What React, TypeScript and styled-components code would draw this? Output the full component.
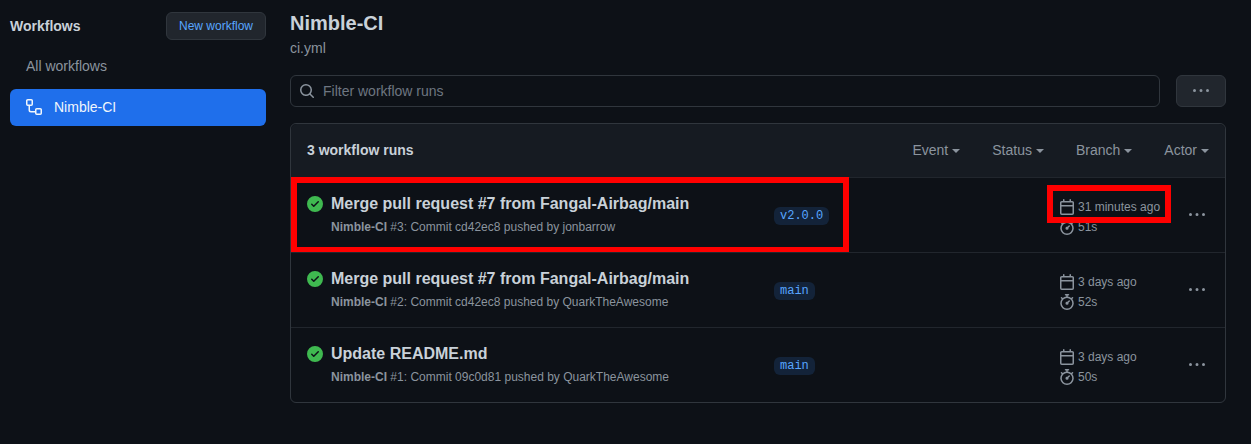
import React from 'react'
import styled, { createGlobalStyle } from 'styled-components'

const paths = {
  search:
    'M10.68 11.74a6 6 0 0 1-7.922-8.982 6 6 0 0 1 8.982 7.922l3.04 3.04a.749.749 0 0 1-.326 1.275.749.749 0 0 1-.734-.215ZM11.5 7a4.499 4.499 0 1 0-8.997 0A4.499 4.499 0 0 0 11.5 7Z',
  kebab:
    'M8 9a1.5 1.5 0 1 0 0-3 1.5 1.5 0 0 0 0 3ZM1.5 9a1.5 1.5 0 1 0 0-3 1.5 1.5 0 0 0 0 3Zm13 0a1.5 1.5 0 1 0 0-3 1.5 1.5 0 0 0 0 3Z',
  calendar:
    'M4.75 0a.75.75 0 0 1 .75.75V2h5V.75a.75.75 0 0 1 1.5 0V2h1.25c.966 0 1.75.784 1.75 1.75v10.5A1.75 1.75 0 0 1 13.25 16H2.75A1.75 1.75 0 0 1 1 14.25V3.75C1 2.784 1.784 2 2.75 2H4V.75A.75.75 0 0 1 4.75 0ZM2.5 7.5v6.75c0 .138.112.25.25.25h10.5a.25.25 0 0 0 .25-.25V7.5Zm10.75-4H2.75a.25.25 0 0 0-.25.25V6h11V3.75a.25.25 0 0 0-.25-.25Z',
  stopwatch:
    'M5.75.75A.75.75 0 0 1 6.5 0h3a.75.75 0 0 1 0 1.5h-.75v1l-.001.041a6.724 6.724 0 0 1 3.464 1.435l.007-.006.75-.75a.75.75 0 1 1 1.06 1.06l-.75.75-.006.007a6.75 6.75 0 1 1-10.548 0L2.72 5.03l-.75-.75a.751.751 0 0 1 .018-1.042.751.751 0 0 1 1.042-.018l.75.75.007.006A6.72 6.72 0 0 1 7.25 2.541V1.5H6.5a.75.75 0 0 1-.75-.75ZM8 14.5a5.25 5.25 0 1 0-.001-10.501A5.25 5.25 0 0 0 8 14.5Zm.389-6.7 1.33-1.33a.75.75 0 1 1 1.061 1.06L9.45 8.861A1.503 1.503 0 0 1 8 10.75a1.499 1.499 0 1 1 .389-2.95Z',
  workflow:
    'M0 1.75C0 .784.784 0 1.75 0h3.5C6.216 0 7 .784 7 1.75v3.5A1.75 1.75 0 0 1 5.25 7H4v4a1 1 0 0 0 1 1h4v-1.25C9 9.784 9.784 9 10.75 9h3.5c.966 0 1.75.784 1.75 1.75v3.5A1.75 1.75 0 0 1 14.25 16h-3.5A1.75 1.75 0 0 1 9 14.25v-.75H5A2.5 2.5 0 0 1 2.5 11V7h-.75A1.75 1.75 0 0 1 0 5.25Zm1.75-.25a.25.25 0 0 0-.25.25v3.5c0 .138.112.25.25.25h3.5a.25.25 0 0 0 .25-.25v-3.5a.25.25 0 0 0-.25-.25Zm9 9a.25.25 0 0 0-.25.25v3.5c0 .138.112.25.25.25h3.5a.25.25 0 0 0 .25-.25v-3.5a.25.25 0 0 0-.25-.25Z',
  check:
    'M8 16A8 8 0 1 1 8 0a8 8 0 0 1 0 16Zm3.78-9.72a.751.751 0 0 0-.018-1.042.751.751 0 0 0-1.042-.018L6.75 9.19 5.28 7.72a.751.751 0 0 0-1.042.018.751.751 0 0 0-.018 1.042l2 2a.75.75 0 0 0 1.06 0Z',
}

function Octicon({ name, color }: { name: keyof typeof paths; color: string }) {
  return (
    <StyledIcon viewBox="0 0 16 16" fill={color}>
      <path d={paths[name]} />
    </StyledIcon>
  )
}

const runs = [
  {
    title: 'Merge pull request #7 from Fangal-Airbag/main',
    number: 3,
    commit: 'cd42ec8',
    author: 'jonbarrow',
    branch: 'v2.0.0',
    date: '31 minutes ago',
    duration: '51s',
    highlighted: true,
  },
  {
    title: 'Merge pull request #7 from Fangal-Airbag/main',
    number: 2,
    commit: 'cd42ec8',
    author: 'QuarkTheAwesome',
    branch: 'main',
    date: '3 days ago',
    duration: '52s',
    highlighted: false,
  },
  {
    title: 'Update README.md',
    number: 1,
    commit: '09c0d81',
    author: 'QuarkTheAwesome',
    branch: 'main',
    date: '3 days ago',
    duration: '50s',
    highlighted: false,
  },
]

const filters = ['Event', 'Status', 'Branch', 'Actor']

export default function App() {
  return (
    <Page>
      <GlobalStyle />
      <Sidebar>
        <SidebarHeader>
          <SidebarTitle>Workflows</SidebarTitle>
          <NewButton>New workflow</NewButton>
        </SidebarHeader>
        <NavItem>All workflows</NavItem>
        <NavItem $active>
          <Octicon name="workflow" color="#f0f6fc" />
          Nimble-CI
        </NavItem>
      </Sidebar>
      <Main>
        <Title>Nimble-CI</Title>
        <FileName>ci.yml</FileName>
        <FilterRow>
          <FilterInput>
            <Octicon name="search" color="#8b949e" />
            Filter workflow runs
          </FilterInput>
          <MoreButton>
            <Octicon name="kebab" color="#8b949e" />
          </MoreButton>
        </FilterRow>
        <RunsBox>
          <BoxHeader>
            <RunCount>3 workflow runs</RunCount>
            <Filters>
              {filters.map((filter) => (
                <Filter key={filter}>
                  {filter}
                  <Caret />
                </Filter>
              ))}
            </Filters>
          </BoxHeader>
          {runs.map((run) => (
            <Row key={run.number}>
              <StatusCell>
                <Octicon name="check" color="#3fb950" />
              </StatusCell>
              <RunInfo>
                <RunTitle>{run.title}</RunTitle>
                <RunMeta>
                  <strong>Nimble-CI</strong> #{run.number}: Commit {run.commit}{' '}
                  pushed by {run.author}
                </RunMeta>
              </RunInfo>
              <BranchCell>
                <BranchLabel>{run.branch}</BranchLabel>
              </BranchCell>
              <TimeCell>
                <TimeLine>
                  <Octicon name="calendar" color="#8b949e" />
                  {run.date}
                </TimeLine>
                <TimeLine>
                  <Octicon name="stopwatch" color="#8b949e" />
                  {run.duration}
                </TimeLine>
              </TimeCell>
              <RowMenu>
                <Octicon name="kebab" color="#8b949e" />
              </RowMenu>
              {run.highlighted && (
                <>
                  <TitleHighlight />
                  <DateHighlight />
                </>
              )}
            </Row>
          ))}
        </RunsBox>
      </Main>
    </Page>
  )
}

const GlobalStyle = createGlobalStyle`
  html, body {
    margin: 0;
    background: #0d1117;
  }
  * {
    box-sizing: border-box;
  }
`
const Page = styled.div`
  width: 1251px;
  height: 444px;
  overflow: hidden;
  display: flex;
  align-items: flex-start;
  background: #0d1117;
  color: #c9d1d9;
  font-family: 'Liberation Sans', Arial, sans-serif;
  font-size: 14px;
`
const StyledIcon = styled.svg`
  width: 16px;
  height: 16px;
  flex: none;
  display: block;
`
const Sidebar = styled.aside`
  width: 256px;
  margin: 12px 24px 0 10px;
  flex: none;
`
const SidebarHeader = styled.div`
  height: 28px;
  display: flex;
  align-items: center;
  justify-content: space-between;
  margin-bottom: 8px;
`
const SidebarTitle = styled.h2`
  margin: 0;
  font-size: 14px;
  font-weight: 700;
  color: #c9d1d9;
`
const NewButton = styled.button`
  width: 100px;
  height: 28px;
  padding: 0;
  border: 1px solid #30363d;
  border-radius: 6px;
  background: #21262d;
  color: #58a6ff;
  font: 12px 'Liberation Sans', Arial, sans-serif;
`
const NavItem = styled.div<{ $active?: boolean }>`
  height: 37px;
  margin-bottom: 4px;
  padding: 0 0 1px 16px;
  display: flex;
  align-items: center;
  gap: 12px;
  border-radius: 6px;
  background: ${(props) => (props.$active ? '#1f6feb' : 'transparent')};
  color: ${(props) => (props.$active ? '#f0f6fc' : '#8b949e')};
`
const Main = styled.main`
  width: 936px;
  flex: none;
  padding-top: 9px;
`
const Title = styled.h1`
  margin: 0;
  font-size: 20px;
  line-height: 28px;
  font-weight: 700;
  color: #c9d1d9;
`
const FileName = styled.div`
  margin-top: 1px;
  line-height: 20px;
  color: #8b949e;
`
const FilterRow = styled.div`
  display: flex;
  gap: 16px;
  margin-top: 17px;
`
const FilterInput = styled.div`
  flex: 1;
  height: 32px;
  padding-left: 8px;
  display: flex;
  align-items: center;
  gap: 8px;
  border: 1px solid #30363d;
  border-radius: 6px;
  background: #0d1117;
  color: #6e7681;
`
const MoreButton = styled.div`
  width: 50px;
  height: 32px;
  display: flex;
  align-items: center;
  justify-content: center;
  border: 1px solid #30363d;
  border-radius: 6px;
  background: #21262d;
`
const RunsBox = styled.section`
  margin-top: 16px;
  border: 1px solid #30363d;
  border-radius: 6px;
`
const BoxHeader = styled.header`
  height: 53px;
  padding: 0 16px 1px;
  display: flex;
  align-items: center;
  justify-content: space-between;
  background: #161b22;
  border-radius: 6px 6px 0 0;
`
const RunCount = styled.h3`
  margin: 0;
  font-size: 14px;
  font-weight: 700;
  color: #c9d1d9;
`
const Filters = styled.div`
  display: flex;
  gap: 32px;
`
const Filter = styled.div`
  display: flex;
  align-items: center;
  gap: 4px;
  color: #8b949e;
`
const Caret = styled.span`
  width: 0;
  height: 0;
  margin-top: 2px;
  border-top: 4px solid #8b949e;
  border-left: 4px solid transparent;
  border-right: 4px solid transparent;
`
const Row = styled.div`
  position: relative;
  height: 75px;
  display: grid;
  grid-template-columns: 24px 443px 285px 124px 1fr;
  padding-left: 16px;
  border-top: 1px solid #21262d;
`
const StatusCell = styled.div`
  padding-top: 18px;
`
const RunInfo = styled.div`
  padding-top: 16px;
  min-width: 0;
`
const RunTitle = styled.div`
  font-size: 16px;
  line-height: 20px;
  font-weight: 700;
  white-space: nowrap;
  color: #c9d1d9;
`
const RunMeta = styled.div`
  margin-top: 4px;
  font-size: 12px;
  line-height: 18px;
  white-space: nowrap;
  color: #8b949e;
`
const BranchCell = styled.div`
  display: flex;
  align-items: flex-start;
  padding-top: 29px;
`
const BranchLabel = styled.span`
  padding: 0 6px;
  height: 18px;
  line-height: 18px;
  border-radius: 6px;
  background: rgba(56, 139, 253, 0.15);
  color: #58a6ff;
  font-family: 'Liberation Mono', 'DejaVu Sans Mono', monospace;
  font-size: 12px;
`
const TimeCell = styled.div`
  padding-top: 20px;
  display: flex;
  flex-direction: column;
  gap: 3px;
`
const TimeLine = styled.div`
  height: 17px;
  display: flex;
  align-items: center;
  gap: 3px;
  font-size: 12px;
  white-space: nowrap;
  color: #8b949e;
`
const RowMenu = styled.div`
  padding-top: 29px;
  padding-left: 6px;
`
const TitleHighlight = styled.div`
  position: absolute;
  left: 0;
  top: -1px;
  width: 558px;
  height: 76px;
  border: 6px solid #ff0000;
`
const DateHighlight = styled.div`
  position: absolute;
  left: 756px;
  top: 7px;
  width: 124px;
  height: 38px;
  border: 6px solid #ff0000;
`
